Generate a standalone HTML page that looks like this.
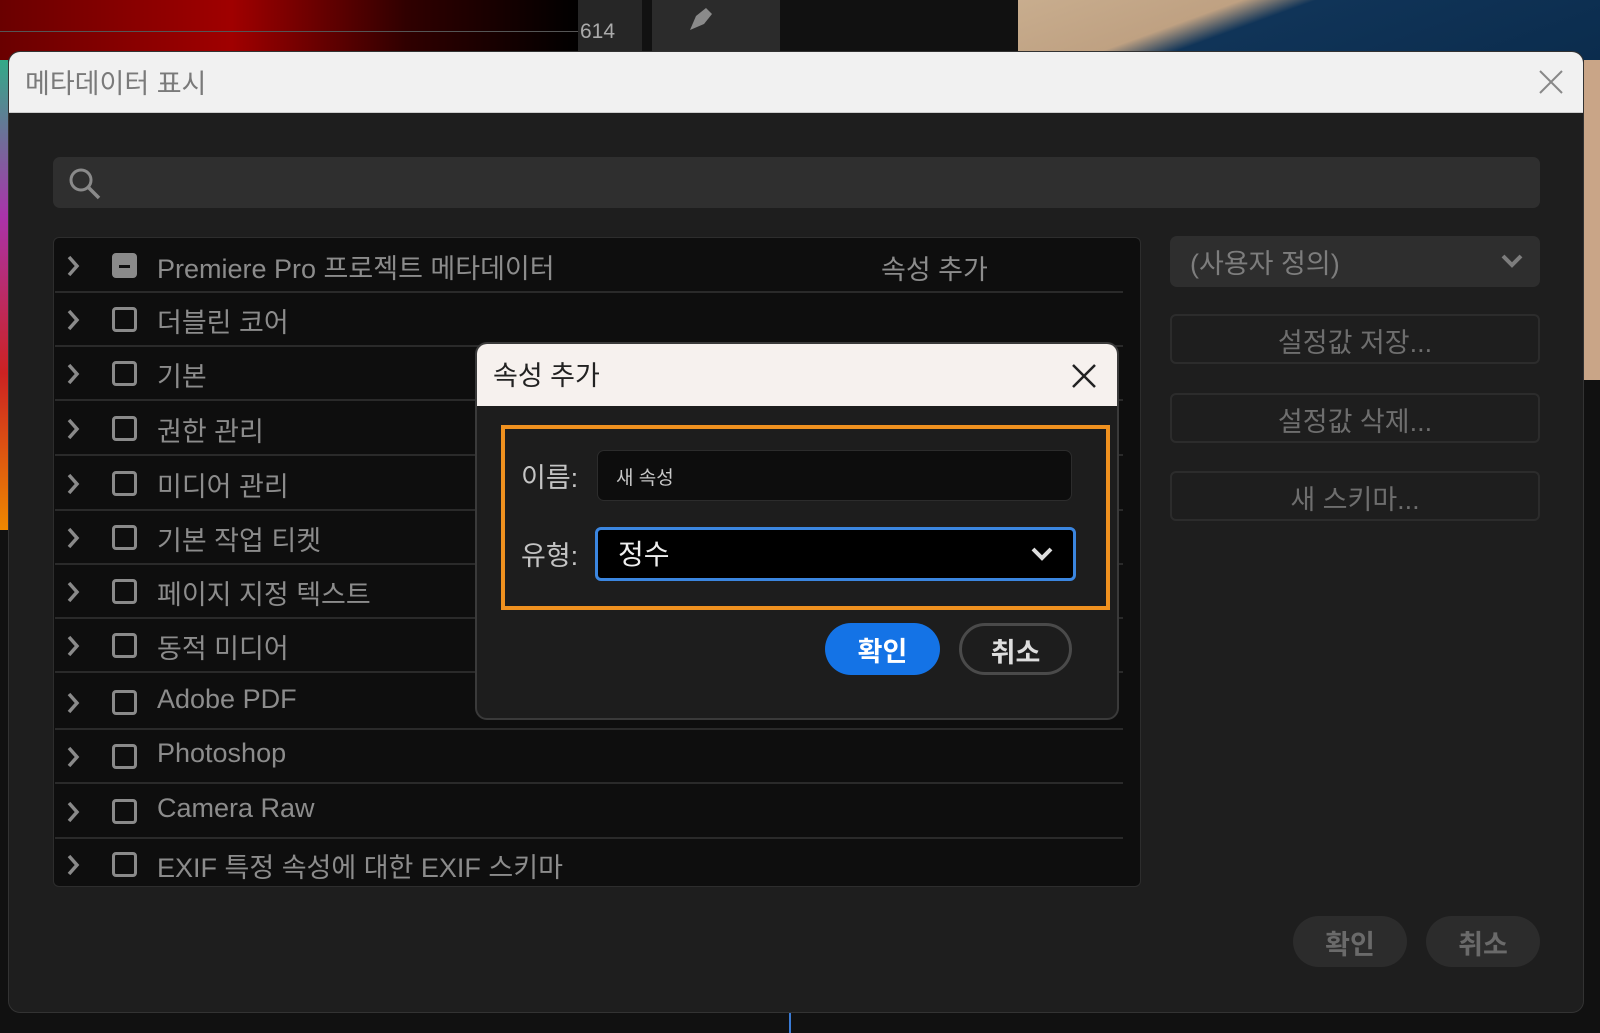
<!DOCTYPE html>
<html><head><meta charset="utf-8"><style>
*{margin:0;padding:0;box-sizing:border-box}
body{width:1600px;height:1033px;overflow:hidden;background:#111;font-family:"Liberation Sans","Noto Sans CJK KR",sans-serif;position:relative}
.abs{position:absolute}
.row{position:absolute;left:55px;width:1068px;height:54px;border-bottom:2px solid #2a2a2a}
.row .chev{position:absolute;left:10px;top:15px}
.row .cb{position:absolute;left:57px;top:14px;width:25px;height:25px;border:3px solid #8a8a8a;border-radius:4px}
.row .t{position:absolute;left:102px;top:8px;font-size:27px;color:#8c8c8c;white-space:nowrap}
.btn{position:absolute;border-radius:26px;text-align:center;font-size:27px;font-weight:bold}
</style></head><body>
<div class="abs" style="left:0;top:0;width:580px;height:60px;background:linear-gradient(90deg,#6a0000,#a00000 40%,#300000 70%,#000)"></div>
<div class="abs" style="left:0;top:31px;width:578px;height:1px;background:#555"></div>
<div class="abs" style="left:578px;top:0;width:64px;height:55px;background:#262626;color:#aaa;font-size:21px;padding:20px 0 0 2px">614</div>
<div class="abs" style="left:652px;top:0;width:128px;height:55px;background:#2b2b2b"></div>
<svg class="abs" style="left:682px;top:0" width="40" height="34"><path d="M8 30 L14 16 L24 8 L30 14 L22 24 Z" fill="#8a8a8a"/></svg>
<div class="abs" style="left:1018px;top:0;width:582px;height:60px;background:linear-gradient(160deg,#c8ad8e 0,#bfa182 30%,#103458 40%,#0b2c4d 100%)"></div>
<div class="abs" style="left:1584px;top:60px;width:16px;height:320px;background:#c9a587"></div>
<div class="abs" style="left:0;top:60px;width:8px;height:470px;background:linear-gradient(#3a8,#a3a,#c22,#e80)"></div>
<div class="abs" style="left:8px;top:51px;width:1576px;height:962px;background:#1e1e1e;border-radius:12px;border:1px solid #333;overflow:hidden">
  <div style="height:61px;background:#f1f1f1;border-bottom:1px solid #ccc;font-size:27px;color:#7a7a7a;padding:10px 0 0 16px">메타데이터 표시</div>
  <svg class="abs" style="left:1529px;top:17px" width="26" height="26"><path d="M2 2L24 24M24 2L2 24" stroke="#888" stroke-width="2"/></svg>
</div>
<div class="abs" style="left:53px;top:157px;width:1487px;height:51px;background:#2f2f2f;border-radius:7px"></div>
<svg class="abs" style="left:68px;top:167px" width="34" height="34"><circle cx="13" cy="13" r="10" fill="none" stroke="#8a8a8a" stroke-width="3"/><path d="M20 20L31 31" stroke="#8a8a8a" stroke-width="3.5"/></svg>
<div class="abs" style="left:53px;top:237px;width:1088px;height:650px;background:#0e0e0e;border:1px solid #2d2d2d;border-radius:6px"></div>
<div class="abs" style="left:881px;top:248px;font-size:27px;color:#8c8c8c">속성 추가</div>
<div id="rows"></div>
<div class="abs" style="left:1170px;top:236px;width:370px;height:51px;background:#2e2e2e;border-radius:7px;color:#7d7d7d;font-size:27px;padding:6px 0 0 20px">(사용자 정의)</div>
<svg class="abs" style="left:1500px;top:252px" width="24" height="18"><path d="M3 4L12 13L21 4" fill="none" stroke="#7d7d7d" stroke-width="4"/></svg>
<div class="abs" style="left:1170px;top:314px;width:370px;height:50px;border:2px solid #2c2c2c;border-radius:6px;color:#6e6e6e;font-size:27px;text-align:center;padding-top:5px">설정값 저장...</div>
<div class="abs" style="left:1170px;top:393px;width:370px;height:50px;border:2px solid #2c2c2c;border-radius:6px;color:#6e6e6e;font-size:27px;text-align:center;padding-top:5px">설정값 삭제...</div>
<div class="abs" style="left:1170px;top:471px;width:370px;height:50px;border:2px solid #2c2c2c;border-radius:6px;color:#6e6e6e;font-size:27px;text-align:center;padding-top:5px">새 스키마...</div>
<div class="btn" style="left:1293px;top:916px;width:114px;height:51px;background:#2c2c2c;color:#6a6a6a;padding-top:7px">확인</div>
<div class="btn" style="left:1426px;top:916px;width:114px;height:51px;background:#2c2c2c;color:#6a6a6a;padding-top:7px">취소</div>
<div class="abs" style="left:789px;top:1013px;width:2px;height:20px;background:#3a7bd5"></div>
<div class="abs" style="left:475px;top:342px;width:644px;height:378px;background:#1d1d1d;border:2px solid #3a3a3a;border-radius:12px;overflow:hidden">
  <div style="height:62px;background:#f6f1ee;font-size:27px;color:#222;padding:10px 0 0 16px">속성 추가</div>
  <svg class="abs" style="left:593px;top:18px" width="28" height="28"><path d="M3 3L25 25M25 3L3 25" stroke="#222" stroke-width="2.5"/></svg>
</div>
<div class="abs" style="left:501px;top:425px;width:609px;height:185px;border:4px solid #f0911f"></div>
<div class="abs" style="left:521px;top:456px;font-size:27px;color:#c4c4c4">이름:</div>
<div class="abs" style="left:597px;top:450px;width:475px;height:51px;background:#0d0d0d;border:1px solid #2c2c2c;border-radius:7px;font-size:19px;color:#c8c8c8;padding:12px 0 0 18px">새 속성</div>
<div class="abs" style="left:521px;top:534px;font-size:27px;color:#c4c4c4">유형:</div>
<div class="abs" style="left:595px;top:527px;width:481px;height:54px;background:#000;border:3px solid #3b86e0;border-radius:6px;font-size:28px;color:#eee;padding:3px 0 0 20px">정수</div>
<svg class="abs" style="left:1030px;top:545px" width="24" height="18"><path d="M3 4L12 13L21 4" fill="none" stroke="#ddd" stroke-width="4"/></svg>
<div class="btn" style="left:825px;top:623px;width:115px;height:52px;background:#1473e6;color:#fff;padding-top:7px">확인</div>
<div class="btn" style="left:959px;top:623px;width:113px;height:52px;border:3px solid #4a4a4a;color:#ddd;padding-top:5px">취소</div>
<script>
var items=[["Premiere Pro 프로젝트 메타데이터",1],["더블린 코어"],["기본"],["권한 관리"],["미디어 관리"],["기본 작업 티켓"],["페이지 지정 텍스트"],["동적 미디어"],["Adobe PDF"],["Photoshop"],["Camera Raw"],["EXIF 특정 속성에 대한 EXIF 스키마"]];
var tops=[239,293,347,402,457,511,565,619,676,730,785,838];
var h="";
items.forEach(function(it,i){
 var last=i==items.length-1;
 h+='<div class="row" style="top:'+tops[i]+'px;'+(last?'border-bottom:none':'')+'"><svg class="chev" width="16" height="24"><path d="M4 3L12 12L4 21" fill="none" stroke="#8a8a8a" stroke-width="3.5"/></svg>'+
 (it[1]?'<div class="cb" style="background:#8a8a8a"><div style="position:absolute;left:4px;top:9px;width:11px;height:3px;background:#111"></div></div>':'<div class="cb"></div>')+
 '<div class="t">'+it[0]+'</div></div>';
});
document.getElementById("rows").innerHTML=h;
</script>
</body></html>
